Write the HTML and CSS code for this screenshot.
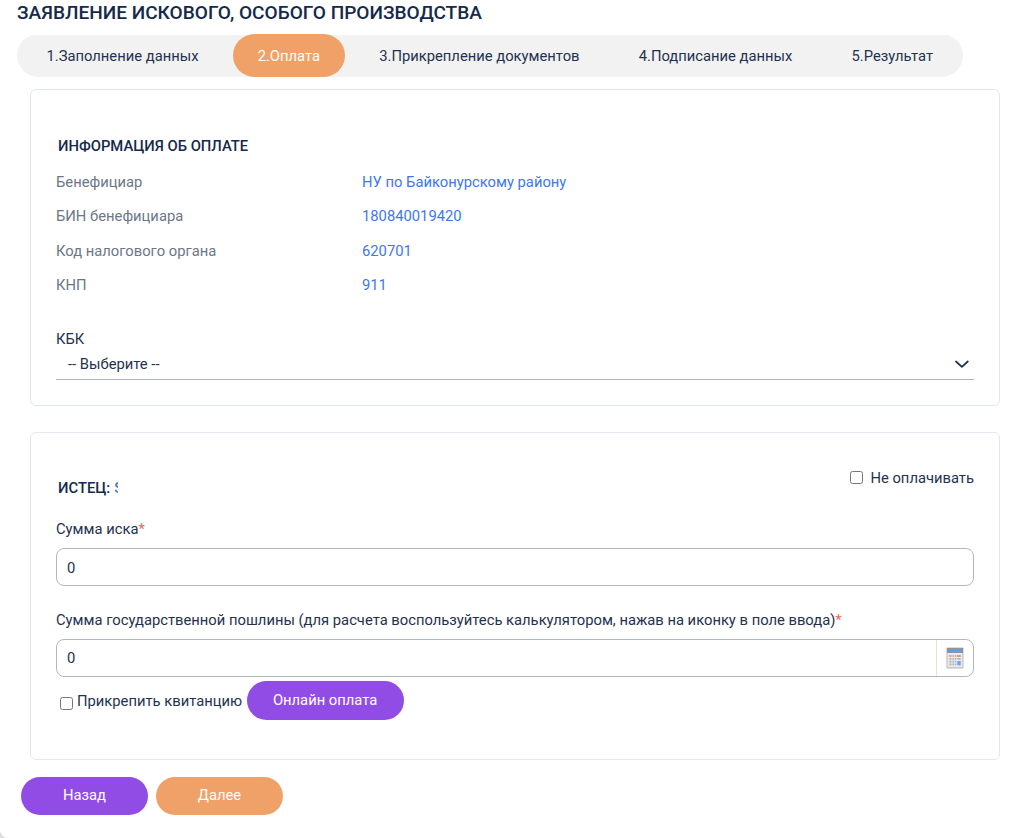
FILE: index.html
```html
<!DOCTYPE html>
<html lang="ru">
<head>
<meta charset="utf-8">
<title>Заявление искового, особого производства</title>
<link rel="stylesheet" href="styles.css">
</head>
<body>
<main class="page">
  <h1 class="page-title">ЗАЯВЛЕНИЕ ИСКОВОГО, ОСОБОГО ПРОИЗВОДСТВА</h1>
  <nav class="steps">
    <span class="step">1.Заполнение данных</span>
    <span class="step step-active">2.Оплата</span>
    <span class="step">3.Прикрепление документов</span>
    <span class="step">4.Подписание данных</span>
    <span class="step">5.Результат</span>
  </nav>

  <section class="card card-info">
    <h2 class="card-title">ИНФОРМАЦИЯ ОБ ОПЛАТЕ</h2>
    <dl class="details">
      <dt>Бенефициар</dt><dd>НУ по Байконурскому району</dd>
      <dt>БИН бенефициара</dt><dd>180840019420</dd>
      <dt>Код налогового органа</dt><dd>620701</dd>
      <dt>КНП</dt><dd>911</dd>
    </dl>
    <div class="kbk-label">КБК</div>
    <div class="select">
      <span>-- Выберите --</span>
      <svg class="chevron" width="16" height="10" viewBox="0 0 16 10"><path d="M2 2.5l5.9 5.3L13.8 2.5" fill="none" stroke="#1d2f4d" stroke-width="1.7" stroke-linecap="round" stroke-linejoin="round"/></svg>
    </div>
  </section>

  <section class="card card-claim">
    <div class="claim-head">
      <h2 class="card-title claimant">ИСТЕЦ: <span class="claimant-name">S</span></h2>
      <label class="no-pay"><input class="check" type="checkbox"><span>Не оплачивать</span></label>
    </div>
    <label class="field-label" for="claim">Сумма иска<span class="required">*</span></label>
    <div class="field"><input class="field-input claim-input" id="claim" type="text" value="0"></div>
    <label class="field-label duty-label" for="duty">Сумма государственной пошлины (для расчета воспользуйтесь калькулятором, нажав на иконку в поле ввода)<span class="required">*</span></label>
    <div class="field">
      <input class="field-input" id="duty" type="text" value="0">
      <span class="calc">
        <svg width="18" height="22" viewBox="0 0 18 22">
          <rect x=".5" y=".5" width="17" height="21" rx=".8" fill="#b9babc"/>
          <rect x="1.5" y="6" width="15" height="14.3" fill="#e9e9ea"/>
          <rect x="1" y="1" width="16" height="5" fill="#929598"/>
          <rect x="2.2" y="2.2" width="13.6" height="3" fill="#6c9bdc"/>
          <path d="M3.3 8h2.2v2H3.3zM11 8h3.8v2H11z" fill="#ee9a60"/>
          <path d="M6.4 8h1.7v2H6.4zM8.8 8h1.6v2H8.8zM3.3 11h2.2v1.7H3.3zM6.4 11h1.7v1.7H6.4zM8.8 11h1.6v1.7H8.8zM11.3 11h3.3v1.7h-3.3zM3.3 13.8h2.2v1.7H3.3zM6.4 13.8h1.7v1.7H6.4zM8.8 13.8h1.6v1.7H8.8zM3.3 16.6h2.2v1.7H3.3zM6.4 16.6h1.7v1.7H6.4zM8.8 16.6h1.6v1.7H8.8z" fill="#b5b6b8"/>
          <rect x="11.3" y="14" width="3.4" height="4.3" fill="#72a5e8"/>
        </svg>
      </span>
    </div>
    <div class="receipt">
      <label class="receipt-label"><input class="check" type="checkbox">Прикрепить квитанцию</label>
      <button class="button button-pay" type="button">Онлайн оплата</button>
    </div>
  </section>

  <div class="actions">
    <button class="button" type="button">Назад</button>
    <button class="button button-next" type="button">Далее</button>
  </div>
  <svg class="corner" width="6" height="6" viewBox="0 0 6 6"><path d="M0 0Q2 4 6 6H0z" fill="#dedede"/></svg>
</main>
</body>
</html>
```
FILE: styles.css
```css
* { box-sizing: border-box; }
body {
  margin: 0;
  background: #fff;
  color: #1f3250;
  font: 400 14.77px/20px Roboto, sans-serif;
}
.page {
  position: relative;
  height: 838px;
  padding: 0 24px 0 17px;
  overflow: hidden;
}
.page-title {
  margin: 0;
  height: 34px;
  color: #14294b;
  font-size: 19.07px;
  font-weight: 500;
  line-height: 25px;
  white-space: nowrap;
}
.steps {
  display: flex;
  justify-content: space-between;
  width: 946px;
  height: 43px;
  padding: 0 5px 0 4.5px;
  background: linear-gradient(#fff 1px, #f2f2f2 1px);
  border-radius: 21.5px;
}
.step {
  height: 43px;
  padding: 0 25px;
  border-radius: 21.5px;
  line-height: 45px;
  white-space: nowrap;
}
.step-active { background: #f0a168; color: #fff; }
.card {
  width: 970px;
  margin-left: 13px;
  padding: 0 25px;
  border: 1px solid #e3e8ef;
  border-radius: 6px;
}
.card-info { height: 317px; margin-top: 12px; padding-top: 46px; }
.card-claim { height: 328px; margin-top: 26px; padding-top: 35px; }
.card-title {
  margin: 0 0 0 2px;
  color: #14294b;
  font-size: 14.8px;
  font-weight: 500;
  line-height: 20px;
}
.details {
  display: grid;
  grid-template-columns: 306px 1fr;
  grid-template-rows: 34px 34.4px 35px 34.2px;
  align-items: center;
  margin: 9px 0 0;
}
.details dt { color: #6c7787; }
.details dd { margin: 0; color: #3e77f2; }
.kbk-label { margin-top: 26px; }
.select {
  display: flex;
  align-items: center;
  justify-content: space-between;
  height: 31px;
  padding: 0 4px 0 12px;
  border-bottom: 1px solid #abb3be;
}
.claim-head { display: flex; justify-content: space-between; height: 51px; }
.claimant { display: flex; gap: 4px; padding-top: 10px; }
.claimant-name { width: 4px; overflow: hidden; color: #3e77f2; }
.no-pay { display: flex; }
.check { flex: none; width: 13px; height: 13px; margin: 0; }
.no-pay .check { margin: 3px 7px 0 0; }
.field-label { display: block; }
.required { color: #f2645f; }
.field {
  display: flex;
  height: 38px;
  margin-top: 9px;
  border: 1px solid #b1b7c2;
  border-radius: 8px;
  overflow: hidden;
}
.field-input {
  flex: 1;
  padding: 0 10px;
  border: 0;
  outline: 0;
  background: none;
  color: inherit;
  font: inherit;
}
.claim-input { padding-top: 2px; }
.duty-label { margin-top: 24px; }
.calc {
  display: flex;
  align-items: center;
  justify-content: center;
  width: 37px;
  border-left: 1px solid #e3e5d2;
}
.receipt { display: flex; gap: 4.5px; margin-top: 4px; }
.receipt-label { display: flex; padding: 10px 0 0 4px; white-space: nowrap; }
.receipt .check { margin: 6px 4px 0 0; }
.button {
  width: 127px;
  height: 38px;
  padding: 0 0 2px;
  border: 0;
  border-radius: 19px;
  background: #924ce6;
  color: #fff;
  font: inherit;
}
.button-pay { width: 157px; height: 39px; border-radius: 19.5px; }
.button-next { background: #f0a168; }
.actions { display: flex; gap: 8px; margin: 17px 0 0 4px; }
.corner { position: absolute; left: 0; bottom: 0; }
```
